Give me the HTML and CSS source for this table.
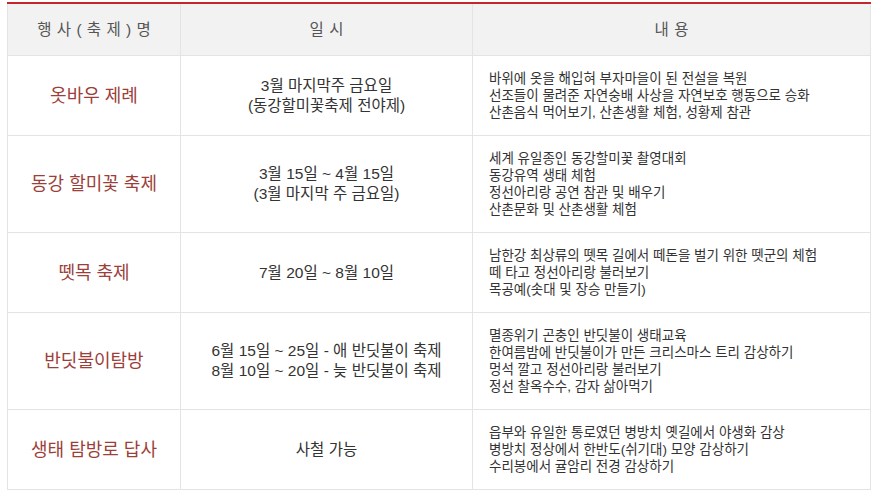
FILE: index.html
```html
<!DOCTYPE html>
<html lang="ko">
<head>
<meta charset="utf-8">
<title>행사(축제)</title>
<link rel="stylesheet" href="styles.css">
</head>
<body>
<div class="wrap">
<table class="fest">
  <colgroup>
    <col class="c-name">
    <col class="c-date">
    <col class="c-desc">
  </colgroup>
  <thead>
    <tr>
      <th>행 사 ( 축 제 ) 명</th>
      <th>일 시</th>
      <th>내 용</th>
    </tr>
  </thead>
  <tbody>
    <tr>
      <td class="name">옷바우 제례</td>
      <td class="date">3월 마지막주 금요일<br>(동강할미꽃축제 전야제)</td>
      <td class="desc">바위에 옷을 해입혀 부자마을이 된 전설을 복원<br>선조들이 물려준 자연숭배 사상을 자연보호 행동으로 승화<br>산촌음식 먹어보기, 산촌생활 체험, 성황제 참관</td>
    </tr>
    <tr>
      <td class="name">동강 할미꽃 축제</td>
      <td class="date">3월 15일 ~ 4월 15일<br>(3월 마지막 주 금요일)</td>
      <td class="desc">세계 유일종인 동강할미꽃 촬영대회<br>동강유역 생태 체험<br>정선아리랑 공연 참관 및 배우기<br>산촌문화 및 산촌생활 체험</td>
    </tr>
    <tr>
      <td class="name">뗏목 축제</td>
      <td class="date">7월 20일 ~ 8월 10일</td>
      <td class="desc">남한강 최상류의 뗏목 길에서 떼돈을 벌기 위한 뗏군의 체험<br>떼 타고 정선아리랑 불러보기<br>목공예(솟대 및 장승 만들기)</td>
    </tr>
    <tr>
      <td class="name">반딧불이탐방</td>
      <td class="date">6월 15일 ~ 25일 - 애 반딧불이 축제<br>8월 10일 ~ 20일 - 늦 반딧불이 축제</td>
      <td class="desc">멸종위기 곤충인 반딧불이 생태교육<br>한여름밤에 반딧불이가 만든 크리스마스 트리 감상하기<br>멍석 깔고 정선아리랑 불러보기<br>정선 찰옥수수, 감자 삶아먹기</td>
    </tr>
    <tr>
      <td class="name">생태 탐방로 답사</td>
      <td class="date">사철 가능</td>
      <td class="desc">읍부와 유일한 통로였던 병방치 옛길에서 야생화 감상<br>병방치 정상에서 한반도(쉬기대) 모양 감상하기<br>수리봉에서 귤암리 전경 감상하기</td>
    </tr>
  </tbody>
</table>
</div>
</body>
</html>
```
FILE: styles.css
```css
html, body {
  margin: 0;
  padding: 0;
  background: #ffffff;
}
body {
  font-family: "Liberation Sans", "Noto Sans CJK KR", sans-serif;
  color: #333333;
}
.wrap {
  padding: 2px 0 0 7px;
}
.fest {
  width: 863px;
  border-collapse: collapse;
  table-layout: fixed;
}
.c-name { width: 173px; }
.c-date { width: 292px; }
.c-desc { width: 398px; }
.fest th {
  background: #f2f2f2;
  border: 1px solid #e4e4e4;
  border-top: 2px solid #c1272d;
  color: #555555;
  font-size: 15.5px;
  font-weight: normal;
  line-height: 20px;
  word-spacing: 1px;
  padding: 16px 0 15px;
  text-align: center;
}
.fest td {
  border: 1px solid #e4e4e4;
  vertical-align: middle;
}
.fest td.name {
  color: #9c3f3a;
  font-size: 18px;
  line-height: 22px;
  text-align: center;
}
.fest td.date {
  font-size: 15.5px;
  line-height: 20px;
  text-align: center;
  color: #333333;
}
.fest td.desc {
  font-size: 13.5px;
  line-height: 17px;
  padding: 14px 10px 14px 16px;
  color: #333333;
}
```
